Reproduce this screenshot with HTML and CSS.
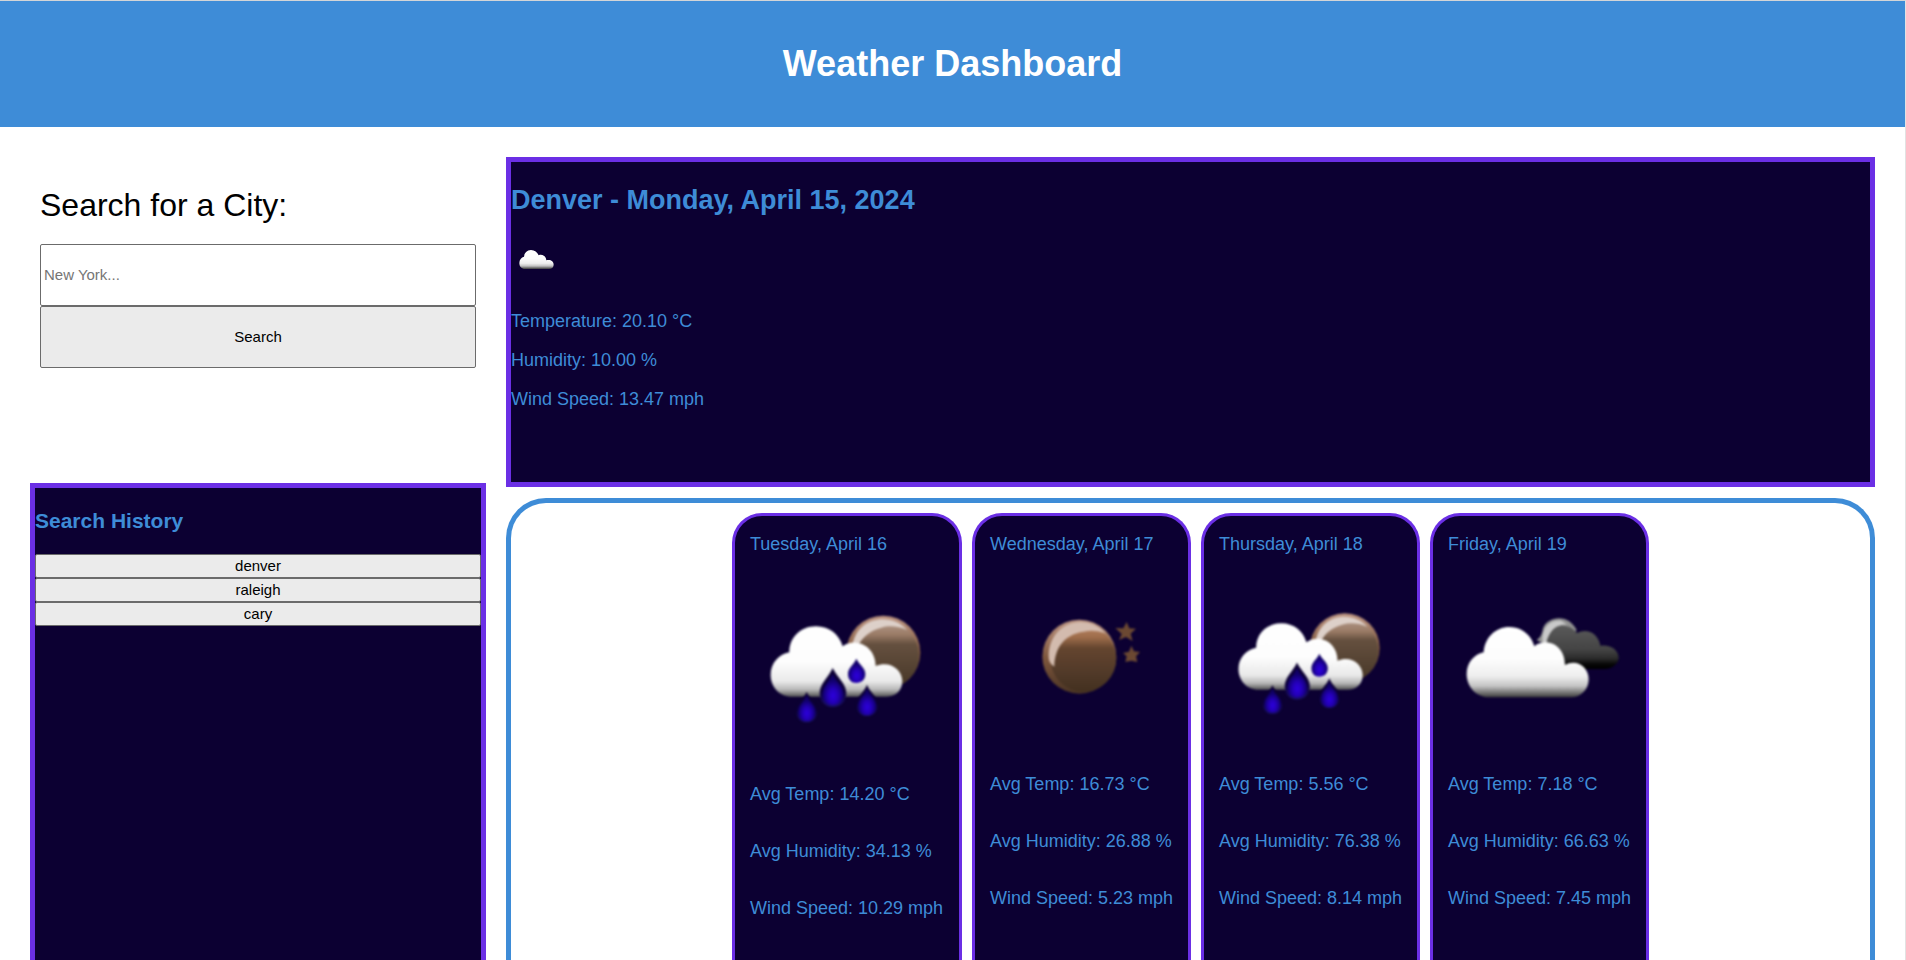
FILE: index.html
```html
<!DOCTYPE html>
<html lang="en">
<head>
<meta charset="utf-8">
<title>Weather Dashboard</title>
<link rel="stylesheet" href="styles.css">
</head>
<body>
<svg class="defs" width="0" height="0" aria-hidden="true">
  <defs>
    <filter id="soft" x="-10%" y="-10%" width="120%" height="120%" color-interpolation-filters="sRGB"><feGaussianBlur stdDeviation="3.4"/></filter>
    <filter id="soft-sm" x="-10%" y="-10%" width="120%" height="120%" color-interpolation-filters="sRGB"><feGaussianBlur stdDeviation="1"/></filter>
    <linearGradient id="cloud" x1="0" y1="0" x2="0" y2="1">
      <stop offset="0" stop-color="#fff"/><stop offset=".45" stop-color="#fdfdfd"/><stop offset=".7" stop-color="#eee"/><stop offset=".84" stop-color="#c4c4c4"/><stop offset=".92" stop-color="#808080"/><stop offset="1" stop-color="#3c3c3c"/>
    </linearGradient>
    <linearGradient id="rain-cloud" x1="0" y1="0" x2="0" y2="1">
      <stop offset="0" stop-color="#fff"/><stop offset=".5" stop-color="#fdfdfd"/><stop offset=".78" stop-color="#eaeaea"/><stop offset=".9" stop-color="#b8b8b8"/><stop offset="1" stop-color="#555"/>
    </linearGradient>
    <linearGradient id="dark-cloud" x1="0" y1="0" x2="0" y2="1">
      <stop offset="0" stop-color="#5a5a5a"/><stop offset=".55" stop-color="#444"/><stop offset=".75" stop-color="#2c2c2c"/><stop offset=".9" stop-color="#050505"/><stop offset="1" stop-color="#000"/>
    </linearGradient>
    <linearGradient id="moon" x1="0" y1="0" x2="0" y2="1">
      <stop offset="0" stop-color="#b98463"/><stop offset=".18" stop-color="#9d6c4a"/><stop offset=".34" stop-color="#64452f"/><stop offset=".7" stop-color="#523a29"/><stop offset="1" stop-color="#43301f"/>
    </linearGradient>
    <linearGradient id="moon-pale" x1="0" y1="0" x2="0" y2="1">
      <stop offset="0" stop-color="#b39a8b"/><stop offset=".2" stop-color="#9a7b66"/><stop offset=".34" stop-color="#65503f"/><stop offset=".7" stop-color="#544232"/><stop offset="1" stop-color="#463524"/>
    </linearGradient>
    <linearGradient id="moon-edge" x1="0" y1="0" x2="0" y2="1">
      <stop offset="0" stop-color="#c09885"/><stop offset=".5" stop-color="#80583e"/><stop offset="1" stop-color="#4a3424"/>
    </linearGradient>
    <radialGradient id="drop" cx=".5" cy=".7" r=".5">
      <stop offset="0" stop-color="#2c00dc"/><stop offset=".45" stop-color="#2400b8"/><stop offset="1" stop-color="#100068"/>
    </radialGradient>
    <linearGradient id="drop-edge" x1="0" y1="0" x2="0" y2="1">
      <stop offset="0" stop-color="#0c0032"/><stop offset=".6" stop-color="#0c0038"/><stop offset="1" stop-color="#1c1270"/>
    </linearGradient>
    <symbol id="shower" viewBox="90 249 582 582">
      <g filter="url(#soft)">
        <circle cx="490" cy="488" r="111" fill="url(#moon-edge)"/>
        <circle cx="496" cy="495" r="101" fill="url(#moon-pale)"/>
        <path d="M398 462C408 414 446 388 488 388C518 388 544 400 562 420C534 408 506 406 484 413C450 422 427 440 413 470Z" fill="#ddd0c9"/>
        <path d="M216 620C178 620 152 590 152 554C152 519 178 492 208 487C208 442 242 409 288 409C328 409 358 434 368 469C380 460 394 457 407 458C442 460 467 490 467 528C508 510 547 538 547 574C547 602 526 620 500 620Z" fill="url(#rain-cloud)"/>
      </g>
      <g filter="url(#soft)">
        <path d="M338 534C326 562 299 580 299 610C299 635 316 651 338 651C362 651 379 635 379 610C379 580 351 562 338 534Z" fill="url(#drop-edge)"/>
        <path d="M338 552C328 575 307 588 307 613C307 633 320 645 338 645C358 645 371 632 371 613C371 588 348 575 338 552Z" fill="url(#drop)"/>
        <path d="M409 506C402 524 384 533 384 552C384 569 394 579 409 579C425 579 436 568 436 552C436 533 417 524 409 506Z" fill="url(#drop)"/>
        <path d="M260 606C251 628 229 640 229 663C229 684 242 697 260 697C279 697 292 684 292 663C292 640 269 628 260 606Z" fill="url(#drop-edge)"/>
        <path d="M260 616C251 636 234 646 234 665C234 682 244 693 260 693C277 693 287 682 287 665C287 646 269 636 260 616Z" fill="url(#drop)"/>
        <path d="M441 584C432 607 410 619 410 644C410 665 423 678 441 678C459 678 473 665 473 644C473 619 449 607 441 584Z" fill="url(#drop-edge)"/>
        <path d="M441 596C433 616 414 627 414 647C414 664 425 675 441 675C458 675 469 664 469 647C469 627 449 616 441 596Z" fill="url(#drop)"/>
      </g>
    </symbol>
    <symbol id="clear-night" viewBox="90 249 549 549">
      <g filter="url(#soft)">
        <circle cx="358" cy="500" r="111" fill="url(#moon-edge)"/>
        <circle cx="370" cy="506" r="99" fill="url(#moon)"/>
        <path d="M266 500C266 438 308 397 361 396C394 396 418 409 436 430C408 420 389 421 371 425C313 433 284 473 283 530C271 522 266 512 266 500Z" fill="#d3bbae"/>
        <path d="M500 396L508 415L528 416L512 431L518 453L498 441L477 450L485 432L466 414L490 415Z" fill="#6b4832"/>
        <path d="M514 467L522 484L540 486L528 499L532 516L514 512L496 516L500 499L489 489L507 485Z" fill="#6b4832"/>
      </g>
    </symbol>
    <symbol id="broken-clouds" viewBox="84 249 549 549">
      <g filter="url(#soft)">
        <path d="M350 450C364 441 366 430 369 415C376 396 396 385 417 385C440 385 458 398 470 420L440 460L385 470Z" fill="#909090"/>
        <path d="M420 537L380 462C376 422 400 405 430 407C448 408 461 416 471 429C502 412 536 431 541 467C571 462 596 480 596 503C596 522 575 537 552 537Z" fill="url(#dark-cloud)"/>
        <path d="M367 456C365 409 390 389 424 392L442 404C412 402 387 420 379 460Z" fill="#c9c9c9"/>
        <path d="M208 622C170 622 140 592 140 552C140 517 163 493 191 487C194 443 226 411 268 411C305 411 334 435 343 469C353 460 366 457 378 457C413 459 435 488 435 525C471 506 506 532 506 568C506 599 482 622 454 622Z" fill="url(#cloud)"/>
      </g>
    </symbol>
    <symbol id="clouds" viewBox="63 294 150 150">
      <path filter="url(#soft-sm)" d="M105 387C95 387 88 380 88 369C88 359 94 352 102 350C103 339 111 330 123 330C134 330 142 337 146 346C157 341 168 349 169 361C181 357 191 364 191 374C191 382 185 387 177 387Z" fill="url(#cloud)"/>
    </symbol>
  </defs>
</svg>

<header class="header"><h1>Weather Dashboard</h1></header>

<main class="dashboard">
  <aside class="sidebar">
    <form class="search">
      <label class="search-label" for="city">Search for a City:</label>
      <input class="search-input" id="city" type="text" placeholder="New York...">
      <button class="search-button" type="button">Search</button>
    </form>
    <section class="history">
      <h3>Search History</h3>
      <button class="history-button" type="button">denver</button>
      <button class="history-button" type="button">raleigh</button>
      <button class="history-button" type="button">cary</button>
    </section>
  </aside>

  <div class="weather">
    <section class="current">
      <h2>Denver - Monday, April 15, 2024</h2>
      <svg class="current-icon"><use href="#clouds"/></svg>
      <p>Temperature: 20.10 °C</p>
      <p>Humidity: 10.00 %</p>
      <p>Wind Speed: 13.47 mph</p>
    </section>
    <section class="forecast">
      <article class="day day-wide">
        <p>Tuesday, April 16</p>
        <svg class="day-icon"><use href="#shower"/></svg>
        <p>Avg Temp: 14.20 °C</p>
        <p>Avg Humidity: 34.13 %</p>
        <p>Wind Speed: 10.29 mph</p>
      </article>
      <article class="day">
        <p>Wednesday, April 17</p>
        <svg class="day-icon"><use href="#clear-night"/></svg>
        <p>Avg Temp: 16.73 °C</p>
        <p>Avg Humidity: 26.88 %</p>
        <p>Wind Speed: 5.23 mph</p>
      </article>
      <article class="day">
        <p>Thursday, April 18</p>
        <svg class="day-icon"><use href="#shower"/></svg>
        <p>Avg Temp: 5.56 °C</p>
        <p>Avg Humidity: 76.38 %</p>
        <p>Wind Speed: 8.14 mph</p>
      </article>
      <article class="day">
        <p>Friday, April 19</p>
        <svg class="day-icon"><use href="#broken-clouds"/></svg>
        <p>Avg Temp: 7.18 °C</p>
        <p>Avg Humidity: 66.63 %</p>
        <p>Wind Speed: 7.45 mph</p>
      </article>
    </section>
  </div>
</main>
</body>
</html>
```

FILE: styles.css
```css
* { box-sizing: border-box; }

body {
  display: flex;
  flex-direction: column;
  height: 960px;
  margin: 0;
  overflow: hidden;
  border-top: 1px solid #d3d5d7;
  border-right: 1px solid #e2e2e2;
  background: #fff;
  font: 18px/21px "Liberation Sans", Arial, sans-serif;
}

.defs { position: absolute; }

.header {
  display: flex;
  flex: none;
  align-items: center;
  justify-content: center;
  height: 126px;
  background: #3e8cd7;
  color: #fff;
}

.header h1 { margin: 0; font-size: 36px; line-height: 42px; }

.dashboard {
  display: grid;
  flex: 1;
  grid-template-columns: 456px 1fr;
  column-gap: 20px;
  min-height: 0;
  padding: 30px 30px 0;
}

.sidebar, .weather { display: flex; flex-direction: column; min-height: 0; }

.search {
  display: flex;
  flex: none;
  flex-direction: column;
  height: 326px;
  padding: 30px 10px 0;
}

.search-label { height: 57px; font-size: 32px; line-height: 36px; }

.search-input, .search-button, .history-button {
  margin: 0;
  border: 1px solid #6b6b6b;
  border-radius: 2px;
  font: 15px "Liberation Sans", Arial, sans-serif;
  color: #000;
}

.search-input { height: 62px; padding: 0 3px 2px; background: #fff; }
.search-input::placeholder { color: #757575; }
.search-button { height: 62px; padding: 0 0 2px; background: #ebebeb; }

.history {
  display: flex;
  flex: 1;
  flex-direction: column;
  border: 5px solid #6b2fe5;
  border-bottom: 0;
  background: #0c0032;
  color: #3e8cd7;
}

.history h3 { margin: 21px 0; font-size: 21px; line-height: 24px; }
.history-button { height: 24px; padding: 0 0 2px; background: #ebebeb; }

.current {
  flex: none;
  height: 330px;
  border: 5px solid #6b2fe5;
  background: #0c0032;
  color: #3e8cd7;
}

.current h2 { margin: 22px 0; font-size: 27px; line-height: 32px; }
.current-icon { display: block; width: 50px; height: 50px; margin-bottom: 23px; }
.current p { margin: 0 0 18px; }

.forecast {
  display: flex;
  flex: 1;
  gap: 10px;
  justify-content: center;
  margin-top: 11px;
  padding-top: 10px;
  border: 5px solid #3e8cd7;
  border-bottom: 0;
  border-radius: 40px 40px 0 0;
}

.day {
  width: 219px;
  padding: 18px 15px 0;
  border: 3px solid #6b2fe5;
  border-bottom: 0;
  border-radius: 30px 30px 0 0;
  background: #0c0032;
  color: #3e8cd7;
  white-space: nowrap;
}

.day p { margin: 0 0 36px; }
.day p:first-child { margin-bottom: 18px; }
.day p:last-child { margin-bottom: 0; }
.day-icon { display: block; width: 100%; aspect-ratio: 1; margin-bottom: 18px; }
.day-wide { width: 230px; }
.day-wide .day-icon { margin-bottom: 17px; }
```
